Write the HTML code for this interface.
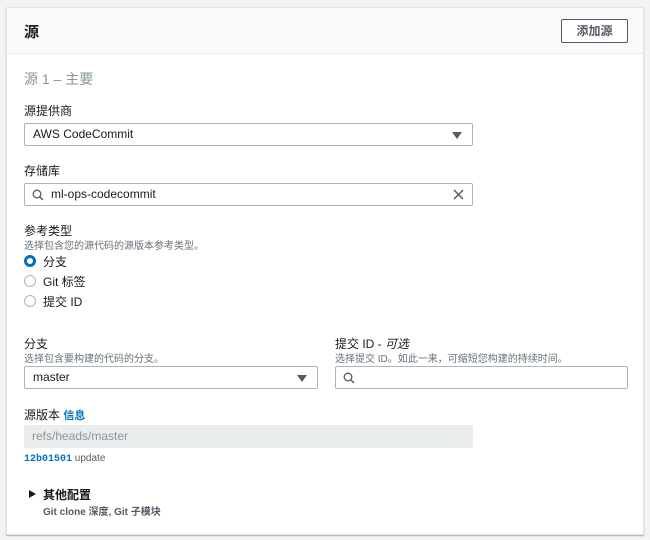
<!DOCTYPE html>
<html><head><meta charset="utf-8"><style>
*{box-sizing:border-box;margin:0;padding:0}
body{width:650px;height:540px;background:#f2f3f3;font-family:"Liberation Sans","Noto Sans CJK SC",sans-serif;color:#16191f;position:relative;overflow:hidden}
.panel{position:absolute;left:6px;top:7px;width:638px;height:528px;background:#fff;border:1px solid #e3e5e5;box-shadow:0 1px 1px rgba(0,28,36,.3)}
.hdr{position:absolute;left:0;top:0;width:636px;height:46px;background:#fafafa;border-bottom:1px solid #eaeded}
.a{position:absolute;white-space:nowrap}
.btn{position:absolute;left:554px;top:11px;width:67px;height:24px;border:1px solid #545b64;border-radius:2px;background:#fff;font-size:12px;font-weight:bold;text-align:center;line-height:22px;color:#545b64}
.lbl{font-size:12px;color:#16191f}
.desc{font-size:10px;color:#687078}
.box{position:absolute;height:23px;border:1px solid #aab7b8;border-radius:2px;background:#fff;font-size:12px;line-height:21px;padding-left:8px}
.tri{position:absolute;right:10px;top:8px;width:0;height:0;border-left:5px solid transparent;border-right:5px solid transparent;border-top:7px solid #545b64}
.radio{position:absolute;width:12px;height:12px;border-radius:50%;border:1px solid #aab7b8;background:#fff}
.radio.on{border:3.5px solid #0073bb}
</style></head><body>
<div class="panel">
<div class="hdr"><div class="a" style="left:17px;top:13px;font-size:15px;font-weight:bold">源</div><div class="btn">添加源</div></div>
<div class="a" style="left:17px;top:61px;font-size:14px;color:#879596">源 1 – 主要</div>
<div class="a lbl" style="left:17px;top:94px">源提供商</div>
<div class="box" style="left:17px;top:115px;width:449px">AWS CodeCommit<div class="tri"></div></div>
<div class="a lbl" style="left:17px;top:154px">存储库</div>
<div class="box" style="left:17px;top:175px;width:449px;padding-left:26px">ml-ops-codecommit
<svg style="position:absolute;left:7px;top:5px" width="12" height="12" viewBox="0 0 12 12"><circle cx="5" cy="5" r="3.8" fill="none" stroke="#545b64" stroke-width="1.3"/><path d="M8 8l3 3" stroke="#545b64" stroke-width="1.4"/></svg>
<svg style="position:absolute;right:8px;top:5px" width="11" height="11" viewBox="0 0 11 11"><path d="M1 1l9 9M10 1l-9 9" stroke="#545b64" stroke-width="1.5"/></svg></div>
<div class="a lbl" style="left:17px;top:214px">参考类型</div>
<div class="a desc" style="left:17px;top:229px">选择包含您的源代码的源版本参考类型。</div>
<div class="radio on" style="left:17px;top:247px"></div><div class="a lbl" style="left:36px;top:245px">分支</div>
<div class="radio" style="left:17px;top:267px"></div><div class="a lbl" style="left:36px;top:265px">Git 标签</div>
<div class="radio" style="left:17px;top:287px"></div><div class="a lbl" style="left:36px;top:285px">提交 ID</div>
<div class="a lbl" style="left:17px;top:327px">分支</div>
<div class="a desc" style="left:17px;top:342px">选择包含要构建的代码的分支。</div>
<div class="box" style="left:17px;top:358px;width:294px">master<div class="tri"></div></div>
<div class="a lbl" style="left:328px;top:327px">提交 ID - <i>可选</i></div>
<div class="a desc" style="left:328px;top:342px">选择提交 ID。如此一来，可缩短您构建的持续时间。</div>
<div class="box" style="left:328px;top:358px;width:293px"><svg style="position:absolute;left:7px;top:5px" width="12" height="12" viewBox="0 0 12 12"><circle cx="5" cy="5" r="3.8" fill="none" stroke="#545b64" stroke-width="1.3"/><path d="M8 8l3 3" stroke="#545b64" stroke-width="1.4"/></svg></div>
<div class="a lbl" style="left:17px;top:398px">源版本 <b style="color:#0073bb;font-size:11px">信息</b></div>
<div class="a" style="left:17px;top:417px;width:449px;height:23px;background:#eaeded;border-radius:2px;font-size:12px;color:#879596;line-height:23px;padding-left:8px">refs/heads/master</div>
<div class="a" style="left:17px;top:445px;font-size:10px;color:#545b64"><b style="color:#0073bb;font-family:'Liberation Mono',monospace">12b01501</b> update</div>
<div class="a" style="left:22px;top:482px;width:0;height:0;border-top:4.5px solid transparent;border-bottom:4.5px solid transparent;border-left:7px solid #16191f"></div>
<div class="a" style="left:36px;top:478px;font-size:12px;font-weight:bold">其他配置</div>
<div class="a" style="left:36px;top:495px;font-size:10px;font-weight:bold;color:#545b64">Git clone 深度, Git 子模块</div>
</div>
</body></html>
